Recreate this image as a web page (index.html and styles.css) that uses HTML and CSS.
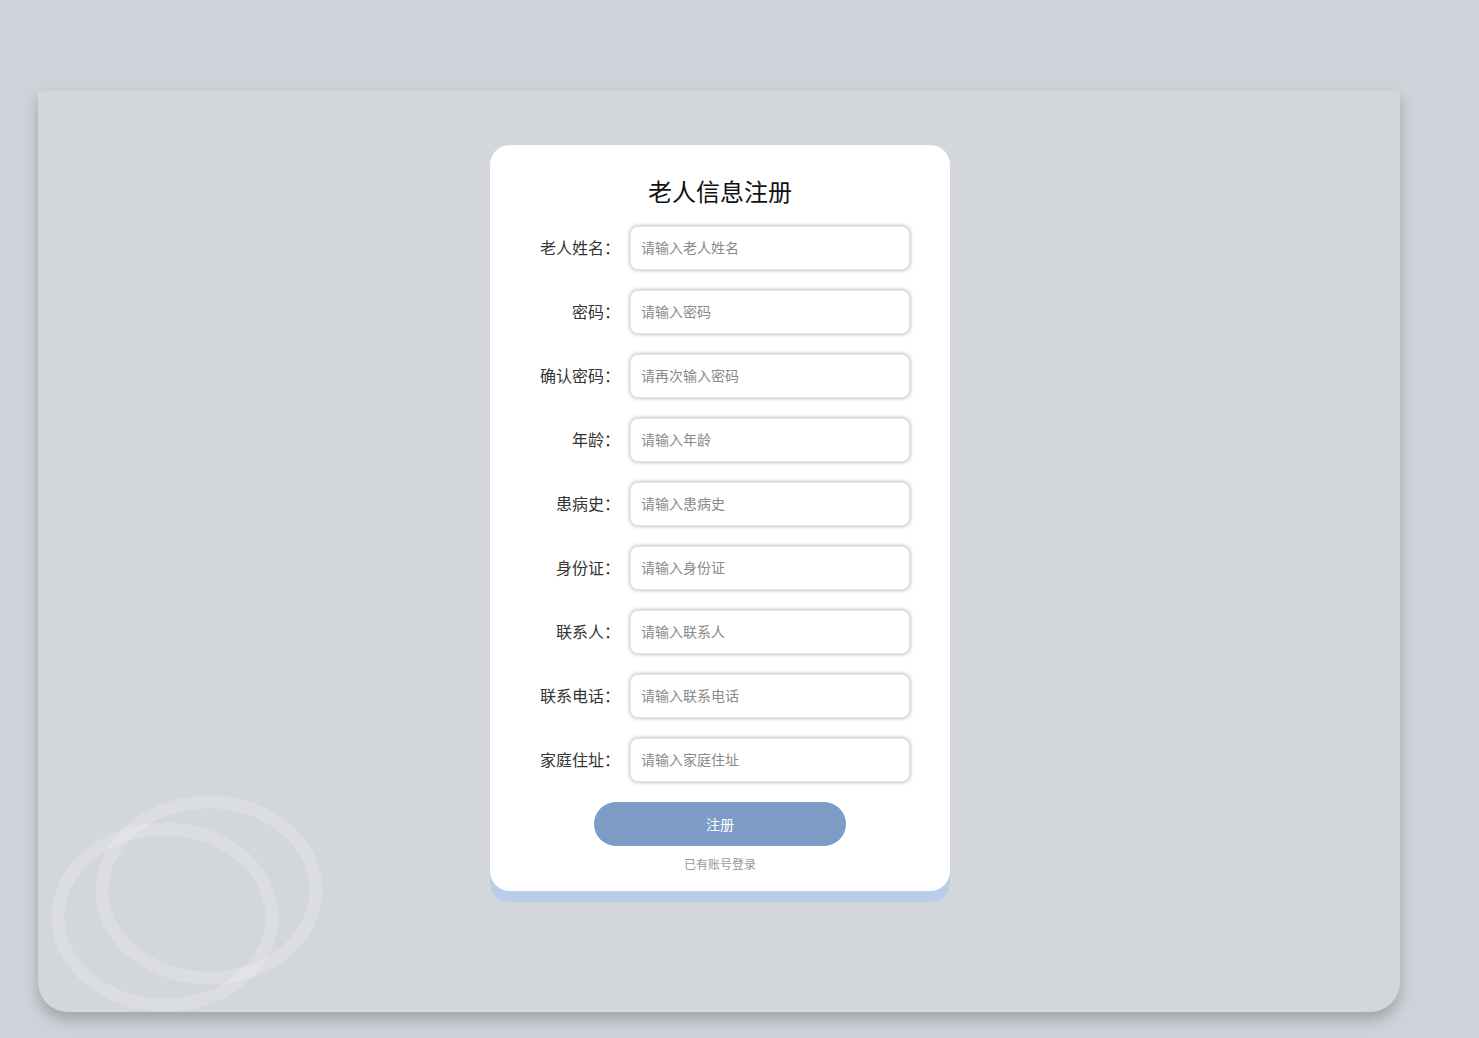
FILE: index.html
```html
<!DOCTYPE html>
<html lang="zh-CN">
<head>
<meta charset="utf-8">
<title>老人信息注册</title>
<link rel="stylesheet" href="styles.css">
</head>
<body>
<div class="panel">
  <svg class="rings" width="330" height="240" viewBox="0 0 330 240">
    <ellipse cx="171" cy="99" rx="107" ry="88" fill="none" stroke="rgba(255,255,255,0.18)" stroke-width="13"/>
    <ellipse cx="127" cy="126" rx="107" ry="88" fill="none" stroke="rgba(255,255,255,0.18)" stroke-width="13"/>
  </svg>
  <form class="card">
    <h1 class="title">老人信息注册</h1>
    <div class="row"><label class="label">老人姓名：</label><input class="field" placeholder="请输入老人姓名"></div>
    <div class="row"><label class="label">密码：</label><input class="field" type="password" placeholder="请输入密码"></div>
    <div class="row"><label class="label">确认密码：</label><input class="field" type="password" placeholder="请再次输入密码"></div>
    <div class="row"><label class="label">年龄：</label><input class="field" placeholder="请输入年龄"></div>
    <div class="row"><label class="label">患病史：</label><input class="field" placeholder="请输入患病史"></div>
    <div class="row"><label class="label">身份证：</label><input class="field" placeholder="请输入身份证"></div>
    <div class="row"><label class="label">联系人：</label><input class="field" placeholder="请输入联系人"></div>
    <div class="row"><label class="label">联系电话：</label><input class="field" placeholder="请输入联系电话"></div>
    <div class="row"><label class="label">家庭住址：</label><input class="field" placeholder="请输入家庭住址"></div>
    <button type="button" class="btn">注册</button>
    <a class="link">已有账号登录</a>
  </form>
</div>
</body>
</html>
```
FILE: styles.css
```css
html, body {
  margin: 0;
  padding: 0;
}
body {
  background: #cfd2d9;
  font-family: "Noto Sans CJK SC", "Noto Sans", sans-serif;
  height: 1038px;
  overflow: hidden;
}
.panel {
  position: relative;
  margin: 91px 0 0 38px;
  width: 1362px;
  height: 921px;
  background: #d3d6db;
  border-radius: 0 0 30px 30px;
  box-shadow: 0 8px 14px rgba(0, 0, 0, 0.22);
  overflow: hidden;
  display: flex;
  justify-content: center;
  align-items: flex-start;
}
.rings {
  position: absolute;
  left: 0;
  bottom: -19px;
  pointer-events: none;
}
.card {
  position: relative;
  margin: 54px 0 0 2px;
  width: 460px;
  box-sizing: border-box;
  padding: 30px 40px 18px;
  background: #fff;
  border-radius: 20px;
  box-shadow: 0 11px 0 #b9cce8;
  display: flex;
  flex-direction: column;
  align-items: center;
}
.title {
  margin: 0 0 19px;
  font-size: 24px;
  line-height: 32px;
  font-weight: normal;
  color: #111;
}
.row {
  display: flex;
  align-items: center;
  margin-bottom: 20px;
}
.label {
  width: 90px;
  margin-right: 10px;
  text-align: right;
  font-size: 16px;
  line-height: 22px;
  padding-bottom: 2px;
  color: #333;
  white-space: nowrap;
}
.field {
  width: 280px;
  height: 44px;
  box-sizing: border-box;
  border: 1px solid #e4e4e4;
  border-radius: 8px;
  padding: 0 10px 2px;
  font-family: inherit;
  font-size: 14px;
  color: #333;
  box-shadow: 0 0 4px rgba(0, 0, 0, 0.32);
  outline: none;
}
.field::placeholder {
  color: #8a8a8a;
}
.btn {
  width: 252px;
  height: 44px;
  border: none;
  border-radius: 22px;
  background: #7d9dc6;
  color: #fff;
  font-family: inherit;
  font-size: 14px;
  cursor: pointer;
}
.link {
  margin-top: 9px;
  font-size: 12px;
  line-height: 18px;
  color: #999;
  cursor: pointer;
}
```
